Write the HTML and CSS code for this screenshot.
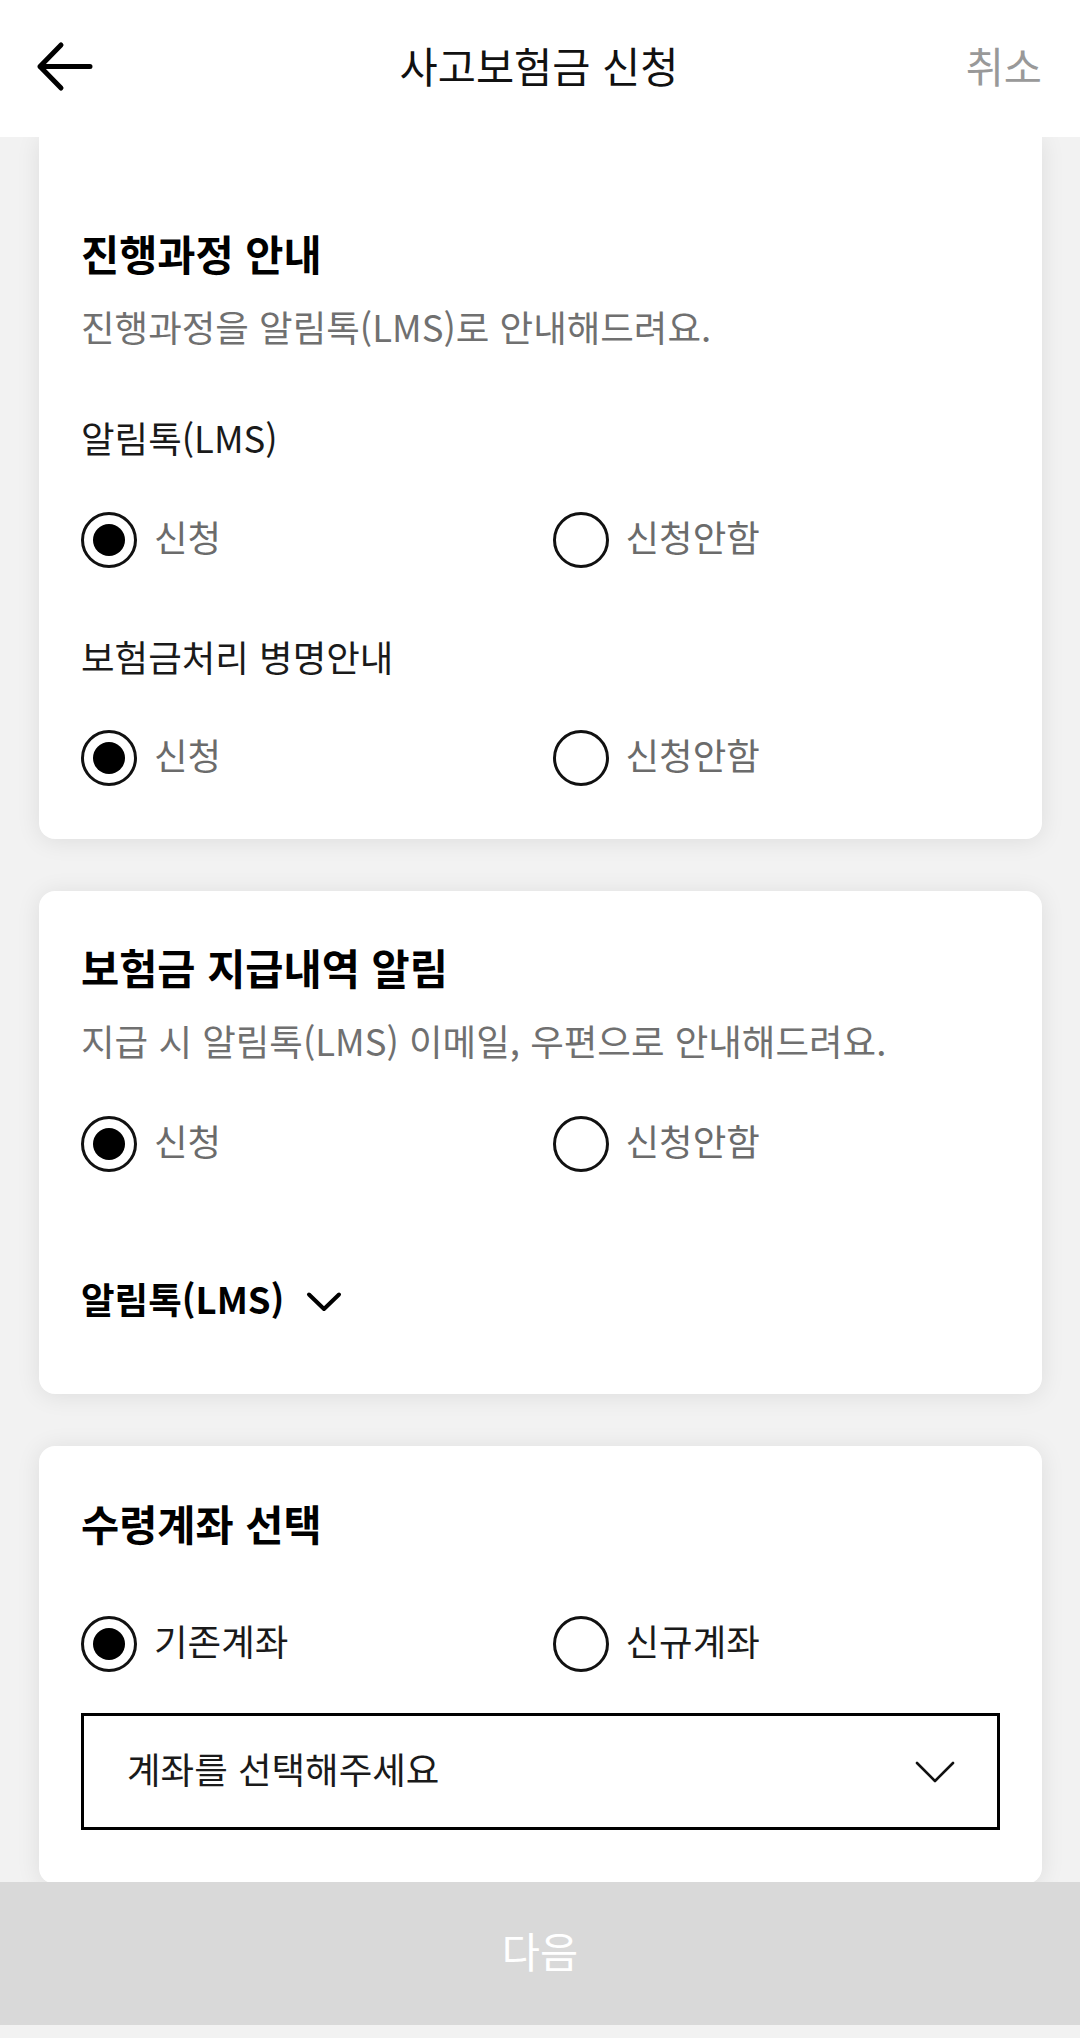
FILE: index.html
```html
<!DOCTYPE html>
<html lang="ko">
<head>
<meta charset="utf-8">
<title>사고보험금 신청</title>
<link rel="stylesheet" href="styles.css">
</head>
<body>
<header class="topbar">
  <div class="topbar-left">
    <svg class="back-icon" width="60" height="60" viewBox="0 0 60 60" aria-hidden="true">
      <path d="M4 27.5 H54 M25 6 L4 27.5 L25 49" fill="none" stroke="#000" stroke-width="5" stroke-linecap="round" stroke-linejoin="round"/>
    </svg>
  </div>
  <h1 class="topbar-title">사고보험금 신청</h1>
  <div class="topbar-right"><span class="cancel">취소</span></div>
</header>

<main class="content">
  <section class="card card-first">
    <h2 class="card-title">진행과정 안내</h2>
    <p class="card-sub">진행과정을 알림톡(LMS)로 안내해드려요.</p>

    <div class="field-label">알림톡(LMS)</div>
    <div class="radio-row radio-row-first">
      <label class="radio"><span class="radio-circle checked"></span><span class="radio-text muted">신청</span></label>
      <label class="radio"><span class="radio-circle"></span><span class="radio-text muted">신청안함</span></label>
    </div>

    <div class="field-label field-label-next">보험금처리 병명안내</div>
    <div class="radio-row radio-row-second">
      <label class="radio"><span class="radio-circle checked"></span><span class="radio-text muted">신청</span></label>
      <label class="radio"><span class="radio-circle"></span><span class="radio-text muted">신청안함</span></label>
    </div>
  </section>

  <section class="card card-second">
    <h2 class="card-title">보험금 지급내역 알림</h2>
    <p class="card-sub">지급 시 알림톡(LMS) 이메일, 우편으로 안내해드려요.</p>
    <div class="radio-row radio-row-sub">
      <label class="radio"><span class="radio-circle checked"></span><span class="radio-text muted">신청</span></label>
      <label class="radio"><span class="radio-circle"></span><span class="radio-text muted">신청안함</span></label>
    </div>
    <div class="method-toggle">
      <span class="method-text">알림톡(LMS)</span>
      <svg class="method-chevron" width="36" height="22" viewBox="0 0 36 22" aria-hidden="true">
        <path d="M3 3.5 L18 18 L33 3.5" fill="none" stroke="#000" stroke-width="4" stroke-linecap="round" stroke-linejoin="round"/>
      </svg>
    </div>
  </section>

  <section class="card card-third">
    <h2 class="card-title">수령계좌 선택</h2>
    <div class="radio-row radio-row-account">
      <label class="radio"><span class="radio-circle checked"></span><span class="radio-text">기존계좌</span></label>
      <label class="radio"><span class="radio-circle"></span><span class="radio-text">신규계좌</span></label>
    </div>
    <div class="select-box">
      <span class="select-text">계좌를 선택해주세요</span>
      <svg class="select-chevron" width="40" height="22" viewBox="0 0 40 22" aria-hidden="true">
        <path d="M2 2 L20 20 L38 2" fill="none" stroke="#111" stroke-width="2.6" stroke-linecap="round" stroke-linejoin="round"/>
      </svg>
    </div>
  </section>
</main>

<footer class="bottom-bar">
  <button class="next-btn" type="button">다음</button>
</footer>
</body>
</html>
```

FILE: styles.css
```css
* { box-sizing: border-box; }

html, body {
  margin: 0;
  padding: 0;
}

body {
  background: #f2f2f2;
  font-family: "Noto Sans CJK KR", "Noto Sans", sans-serif;
  color: #111;
  width: 1080px;
  height: 2038px;
  overflow: hidden;
}

.topbar {
  position: relative;
  z-index: 2;
  height: 137px;
  background: #fff;
  display: grid;
  grid-template-columns: 1fr auto 1fr;
  align-items: center;
  padding: 0 38px 0 36px;
}

.topbar-left { display: flex; align-items: center; }
.back-icon { display: block; }

.topbar-title {
  margin: 0 0 8px;
  font-size: 41.5px;
  font-weight: 400;
  color: #111;
  line-height: 56px;
}

.topbar-right { display: flex; justify-content: flex-end; margin-bottom: 8px; }
.cancel {
  font-size: 41.5px;
  color: #999;
  line-height: 56px;
}

.content {
  padding: 0 38px 0 39px;
  display: flex;
  flex-direction: column;
  gap: 52px;
}

.card {
  background: #fff;
  border-radius: 16px;
  box-shadow: 0 2px 24px rgba(0, 0, 0, 0.09);
  padding: 50px 42px 54px 42px;
}

.card-first {
  border-radius: 0 0 16px 16px;
  padding-top: 89px;
  padding-bottom: 53px;
}

.card-second {
  padding-top: 49px;
  padding-bottom: 70px;
}

.card-title {
  margin: 0;
  font-size: 41.5px;
  font-weight: 700;
  line-height: 54px;
  color: #000;
}

.card-sub {
  margin: 23px 0 0;
  font-size: 36.5px;
  line-height: 48px;
  color: #707070;
}

.field-label {
  margin-top: 63px;
  font-size: 36.5px;
  line-height: 48px;
  color: #1a1a1a;
}

.field-label-next { margin-top: 65px; }

.radio-row {
  margin-top: 47px;
  display: grid;
  grid-template-columns: 1fr 1fr;
  column-gap: 24px;
  height: 56px;
}

.radio-row-first { margin-top: 50px; }
.radio-row-second { margin-top: 49px; }
.radio-row-sub { margin-top: 51px; }
.radio-row-account { margin-top: 66px; }

.radio {
  display: flex;
  align-items: center;
  gap: 17px;
}

.radio-circle {
  width: 56px;
  height: 56px;
  border: 3px solid #111;
  border-radius: 50%;
  display: flex;
  align-items: center;
  justify-content: center;
  flex: none;
  background: #fff;
}

.radio-circle.checked::after {
  content: "";
  width: 32px;
  height: 32px;
  border-radius: 50%;
  background: #000;
}

.radio-text {
  font-size: 36.5px;
  line-height: 48px;
  color: #1a1a1a;
  margin-bottom: 6px;
}

.radio-text.muted { color: #6b6b6b; }

.method-toggle {
  margin-top: 102px;
  height: 50px;
  display: flex;
  align-items: center;
  gap: 22px;
}

.method-text {
  font-size: 36.5px;
  font-weight: 700;
  line-height: 50px;
  color: #000;
}

.method-chevron { display: block; margin-top: 6px; }

.select-box {
  margin-top: 41px;
  height: 117px;
  border: 3px solid #000;
  display: flex;
  align-items: center;
  justify-content: space-between;
  padding: 0 42px 0 43px;
}

.select-text {
  font-size: 36.5px;
  line-height: 48px;
  color: #1a1a1a;
  margin-bottom: 6px;
}

.select-chevron { display: block; }

.bottom-bar {
  position: fixed;
  left: 0;
  right: 0;
  bottom: 0;
  z-index: 3;
  background: #f2f2f2;
  padding-bottom: 13px;
}

.next-btn {
  display: block;
  width: 100%;
  height: 143px;
  border: 0;
  margin: 0;
  padding: 0 0 8px;
  background: #d9d9d9;
  color: #fff;
  font-family: "Noto Sans CJK KR", "Noto Sans", sans-serif;
  font-size: 41.5px;
  font-weight: 400;
}
```
